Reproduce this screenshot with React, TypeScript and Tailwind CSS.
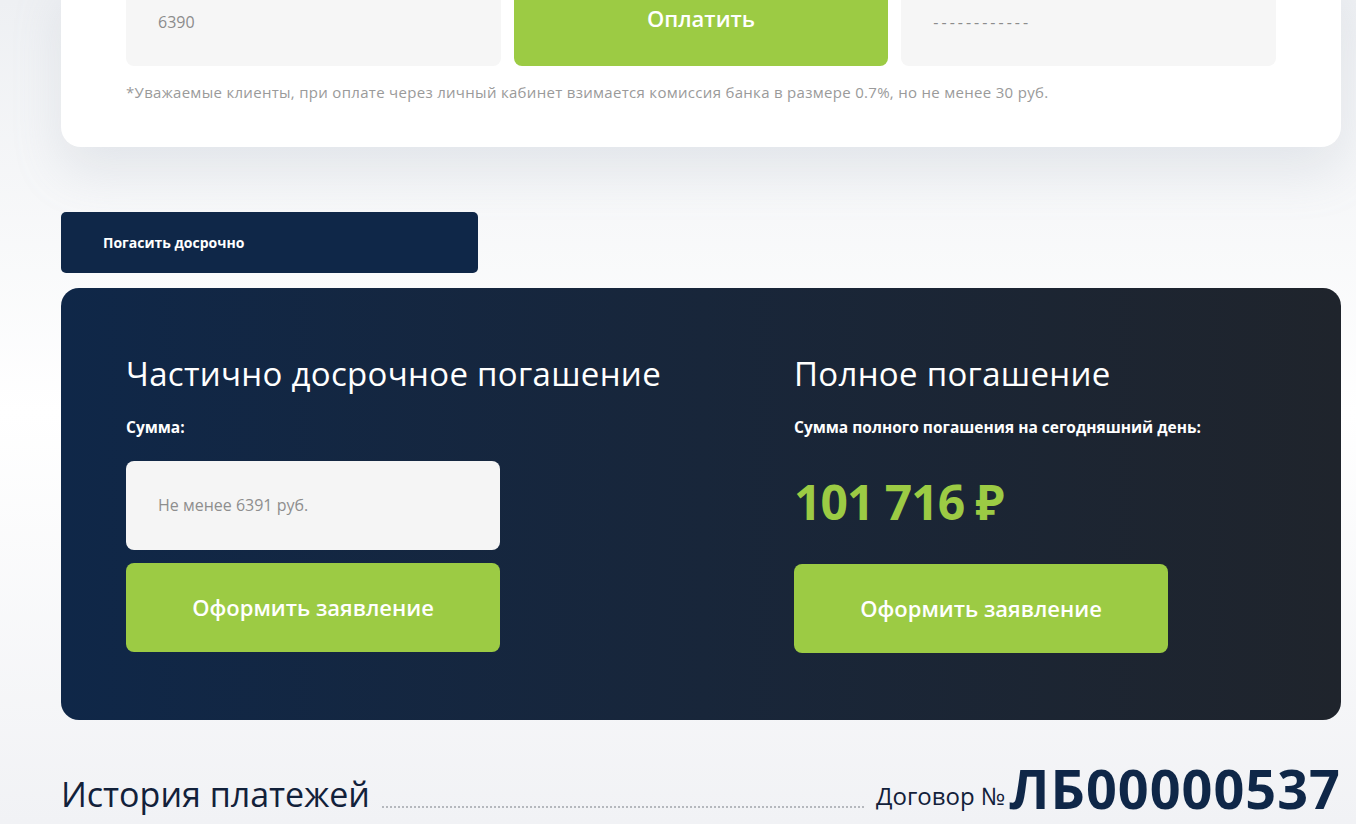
export default function App() {
  const font = { fontFamily: '"Open Sans", "Noto Sans", sans-serif' }

  return (
    <div
      className="min-h-[824px] overflow-hidden bg-gradient-to-b from-[#eef0f3] via-white to-[#f1f2f5] pl-[61px] pr-[15px]"
      style={font}
    >
      {/* payment card */}
      <div className="-mt-6 rounded-b-[20px] bg-white px-[65px] pb-[43px] shadow-[0_25px_50px_rgba(150,160,180,0.18)]">
        <div className="grid grid-cols-3 gap-[13px]">
          <div className="flex h-[90px] items-center rounded-b-lg bg-[#f6f6f6] pl-8 pt-[2px] text-[16px] text-[#8c8c8c]">
            6390
          </div>
          <button className="flex h-[90px] items-center justify-center rounded-b-lg bg-[#9ccb44] pb-[6px] text-[22px] font-semibold text-white">
            Оплатить
          </button>
          <div className="flex h-[90px] items-center rounded-b-lg bg-[#f6f6f6] pl-8 pt-[2px] text-[16px] tracking-[3px] text-[#8c8c8c]">
            ------------
          </div>
        </div>
        <p className="mt-[15px] text-[15px] tracking-[0.3px] text-[#9a9a9a]">
          *Уважаемые клиенты, при оплате через личный кабинет взимается комиссия банка в размере 0.7%, но не менее 30 руб.
        </p>
      </div>

      {/* early repayment tab */}
      <button className="mt-[65px] flex h-[61px] w-[417px] items-center rounded-[5px] bg-[#0f2748] pl-[42px] text-[14px] font-bold text-white">
        Погасить досрочно
      </button>

      <div className="mt-[15px] grid grid-cols-[668px_1fr] rounded-[18px] bg-gradient-to-r from-[#0f2748] to-[#1f242c] px-[65px] pb-[67px] pt-[63px] text-white">
        <div>
          <h2 className="text-[33px] font-medium leading-[46px] tracking-[0.3px]">Частично досрочное погашение</h2>
          <div className="mt-[19px] text-[15.5px] font-bold">Сумма:</div>
          <div className="mt-[22px] flex h-[89px] w-[374px] items-center rounded-lg bg-[#f5f5f5] pl-8 text-[16px] text-[#8e8e8e]">
            Не менее 6391 руб.
          </div>
          <button className="mt-[13px] flex h-[89px] w-[374px] items-center justify-center rounded-lg bg-[#9ccb44] text-[22px] font-semibold text-white">
            Оформить заявление
          </button>
        </div>
        <div>
          <h2 className="text-[33px] font-medium leading-[46px] tracking-[0.3px]">Полное погашение</h2>
          <div className="mt-[19px] text-[15.5px] font-bold">Сумма полного погашения на сегодняшний день:</div>
          <div className="mt-[33px] h-[92px] text-[48px] font-bold leading-[60px] tracking-[-1px] text-[#9ccb44]">
            101 716 ₽
          </div>
          <button className="flex h-[89px] w-[374px] items-center justify-center rounded-lg bg-[#9ccb44] text-[22px] font-semibold text-white">
            Оформить заявление
          </button>
        </div>
      </div>

      {/* history header */}
      <div className="mt-[39px] flex items-end text-[#0f2748]">
        <h2 className="text-[34px] font-medium leading-[46px] text-[#12213a]">История платежей</h2>
        <div className="mx-3 mb-[9px] flex-1 border-b-2 border-dotted border-[#b5b8bd]" />
        <span className="mb-[3px] text-[24px] text-[#12213a]">Договор №</span>
        <span className="ml-1 text-[54px] font-bold leading-[58px] tracking-[1px] text-[#0f2748]">ЛБ00000537</span>
      </div>
    </div>
  )
}
